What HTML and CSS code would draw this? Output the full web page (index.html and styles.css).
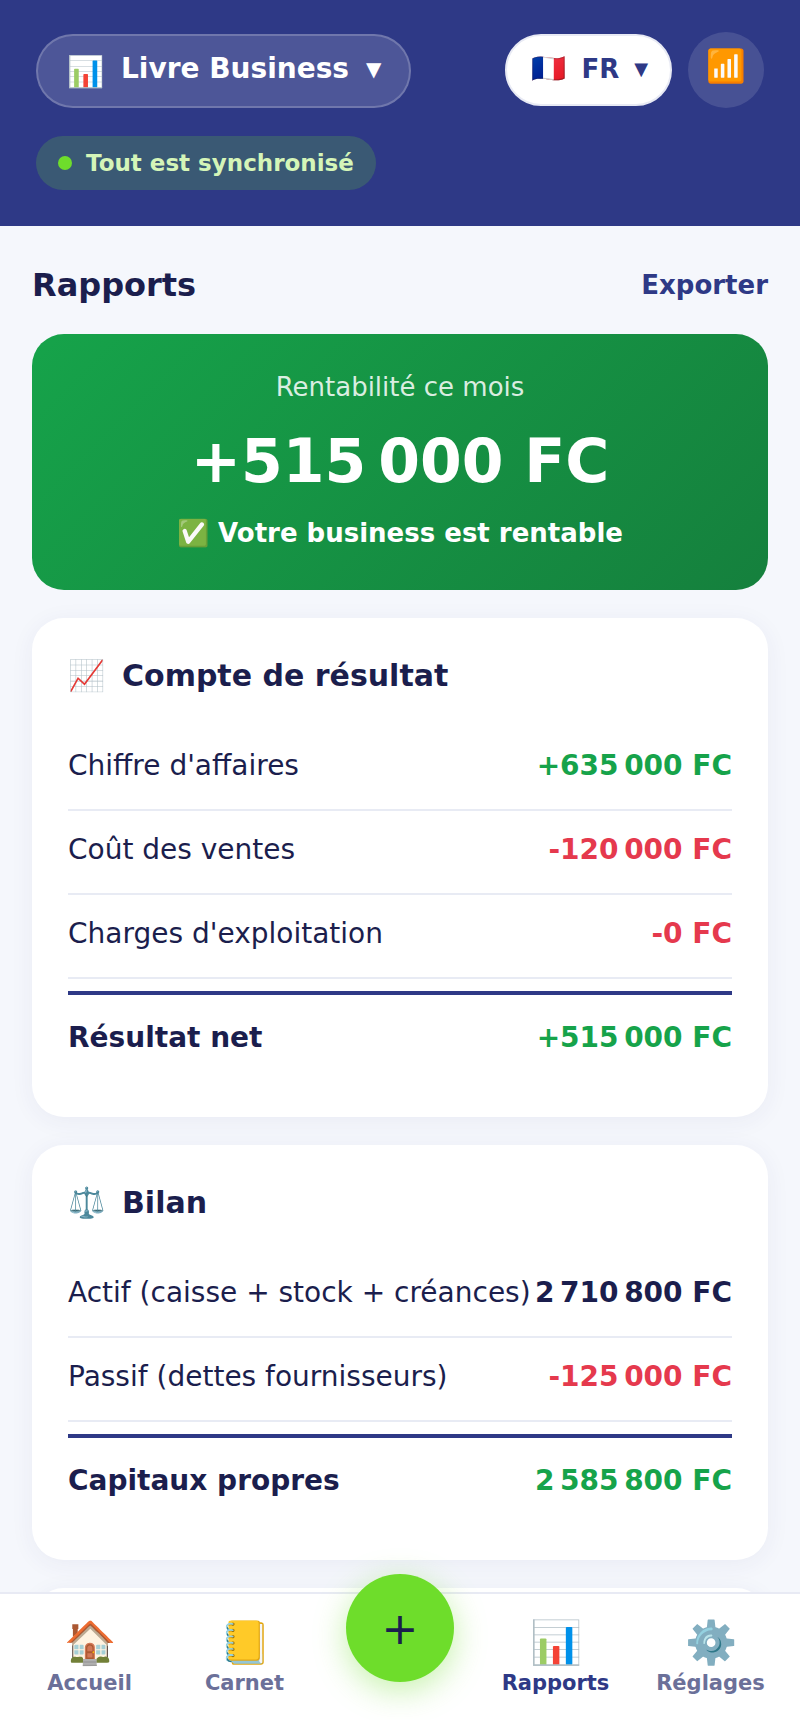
FILE: index.html
```html
<!DOCTYPE html>
<html lang="fr">
<head>
    <meta charset="UTF-8">
    <title>Livre Business</title>
    <link rel="stylesheet" href="styles.css">
</head>
<body>
    <header class="header">
        <div class="header-top">
            <button class="book-btn"><span class="book-icon">📊</span> Livre Business <span class="arrow">▼</span></button>
            <div class="header-actions">
                <button class="lang-btn"><span class="flag">🇫🇷</span> FR <span class="arrow-sm">▼</span></button>
                <button class="net-btn" aria-label="Réseau">📶</button>
            </div>
        </div>
        <div class="sync"><span class="dot"></span>Tout est synchronisé</div>
    </header>

    <main class="content">
        <div class="page-head">
            <h1>Rapports</h1>
            <a href="#" class="export">Exporter</a>
        </div>

        <section class="hero">
            <p class="hero-label">Rentabilité ce mois</p>
            <p class="hero-amount">+515&#8239;000 FC</p>
            <p class="hero-note">✅ Votre business est rentable</p>
        </section>

        <section class="card">
            <h2><span class="card-icon">📈</span>Compte de résultat</h2>
            <div class="row"><span>Chiffre d'affaires</span><span class="amount plus">+635&#8239;000 FC</span></div>
            <div class="row"><span>Coût des ventes</span><span class="amount minus">-120&#8239;000 FC</span></div>
            <div class="row"><span>Charges d'exploitation</span><span class="amount minus">-0 FC</span></div>
            <div class="row total"><span>Résultat net</span><span class="amount plus">+515&#8239;000 FC</span></div>
        </section>

        <section class="card">
            <h2><span class="card-icon">⚖️</span>Bilan</h2>
            <div class="row"><span>Actif (caisse + stock + créances)</span><span class="amount">2&#8239;710&#8239;800 FC</span></div>
            <div class="row"><span>Passif (dettes fournisseurs)</span><span class="amount minus">-125&#8239;000 FC</span></div>
            <div class="row total"><span>Capitaux propres</span><span class="amount plus">2&#8239;585&#8239;800 FC</span></div>
        </section>

        <section class="card"></section>
    </main>

    <nav class="nav">
        <a href="#" class="nav-item"><span class="nav-icon">🏠</span>Accueil</a>
        <a href="#" class="nav-item"><span class="nav-icon">📒</span>Carnet</a>
        <button class="fab" aria-label="Ajouter">+</button>
        <a href="#" class="nav-item active"><span class="nav-icon">📊</span>Rapports</a>
        <a href="#" class="nav-item"><span class="nav-icon">⚙️</span>Réglages</a>
    </nav>
</body>
</html>
```

FILE: styles.css
```css
* { box-sizing: border-box; margin: 0; padding: 0; }
body { font-family: "DejaVu Sans", sans-serif; background: #f5f7fc; color: #1b1e4d; font-size: 28px; }
button { font-family: inherit; font-weight: bold; border: none; cursor: pointer; }
a { text-decoration: none; }

.header { background: #2e3986; padding: 32px 36px 36px; }
.header-top { display: flex; justify-content: space-between; align-items: flex-end; margin-bottom: 28px; }
.book-btn { display: flex; align-items: center; gap: 17px; height: 74px; padding: 0 28px 5px 29px; border: 2px solid rgba(255,255,255,0.2); border-radius: 40px; background: rgba(255,255,255,0.15); color: #fff; font-size: 28px; }
.book-icon { padding-top: 6px; font-size: 30px; font-weight: normal; }
.arrow { font-size: 20px; }
.header-actions { display: flex; align-items: center; gap: 16px; }
.lang-btn { display: flex; align-items: center; gap: 15px; height: 72px; padding: 0 22px 3px 24px; border: 2px solid #e8eaf4; border-radius: 40px; background: #fff; color: #2e3986; font-size: 26px; }
.flag { font-size: 28px; }
.arrow-sm { font-size: 18px; }
.net-btn { width: 76px; height: 76px; padding-bottom: 8px; border-radius: 50%; background: rgba(255,255,255,0.12); font-size: 32px; font-weight: normal; }
.sync { display: inline-flex; align-items: center; gap: 14px; height: 54px; padding: 0 22px 1px; border-radius: 30px; background: rgba(110,221,43,0.2); color: #d5f5b8; font-size: 23px; font-weight: bold; }
.dot { width: 14px; height: 14px; border-radius: 50%; background: #6edd2b; }

.content { padding: 36px 32px 0; }
.page-head { display: flex; justify-content: space-between; align-items: center; margin-bottom: 26px; line-height: 46px; }
h1 { font-size: 32px; }
.export { color: #2e3986; font-size: 26px; font-weight: bold; }

.hero { background: linear-gradient(135deg, #16a34a, #15803d); border-radius: 32px; padding: 34px 36px 37px; margin-bottom: 28px; color: #fff; text-align: center; }
.hero-label { font-size: 26px; line-height: 39px; color: rgba(255,255,255,0.85); }
.hero-amount { margin: 9px 0 8px; font-size: 60px; line-height: 90px; font-weight: bold; }
.hero-note { font-size: 26px; line-height: 39px; font-weight: bold; }

.card { background: #fff; border-radius: 32px; padding: 36px; margin-bottom: 28px; box-shadow: 0 4px 24px rgba(45,48,125,0.06); }
h2 { display: flex; align-items: center; gap: 17px; font-size: 30px; line-height: 44px; margin-bottom: 29px; }
.card-icon { font-size: 30px; font-weight: normal; }
.row { display: flex; justify-content: space-between; padding: 21px 0 25px; border-bottom: 2px solid #e8ebf4; line-height: 36px; }
.amount { font-weight: bold; white-space: nowrap; }
.plus { color: #16a34a; }
.minus { color: #e5394d; }
.total { margin-top: 12px; padding-top: 25px; border-top: 4px solid #2e3986; border-bottom: none; font-weight: bold; }

.nav { position: fixed; left: 0; right: 0; bottom: 0; display: flex; justify-content: space-around; height: 128px; padding: 0 12px; background: #fff; border-top: 2px solid #e8eaf4; }
.nav-item { flex: 1; display: flex; flex-direction: column; align-items: center; padding-top: 22px; color: #6b7099; font-size: 21px; line-height: 28px; font-weight: bold; }
.nav-icon { font-size: 42px; line-height: 53px; font-weight: normal; }
.active { color: #2e3986; }
.fab { width: 108px; height: 108px; margin: -20px 24px 0; border-radius: 50%; background: #6edd2b; color: #1b1e4d; font-size: 44px; font-weight: normal; box-shadow: 0 8px 32px rgba(110,221,43,0.4); }
```
